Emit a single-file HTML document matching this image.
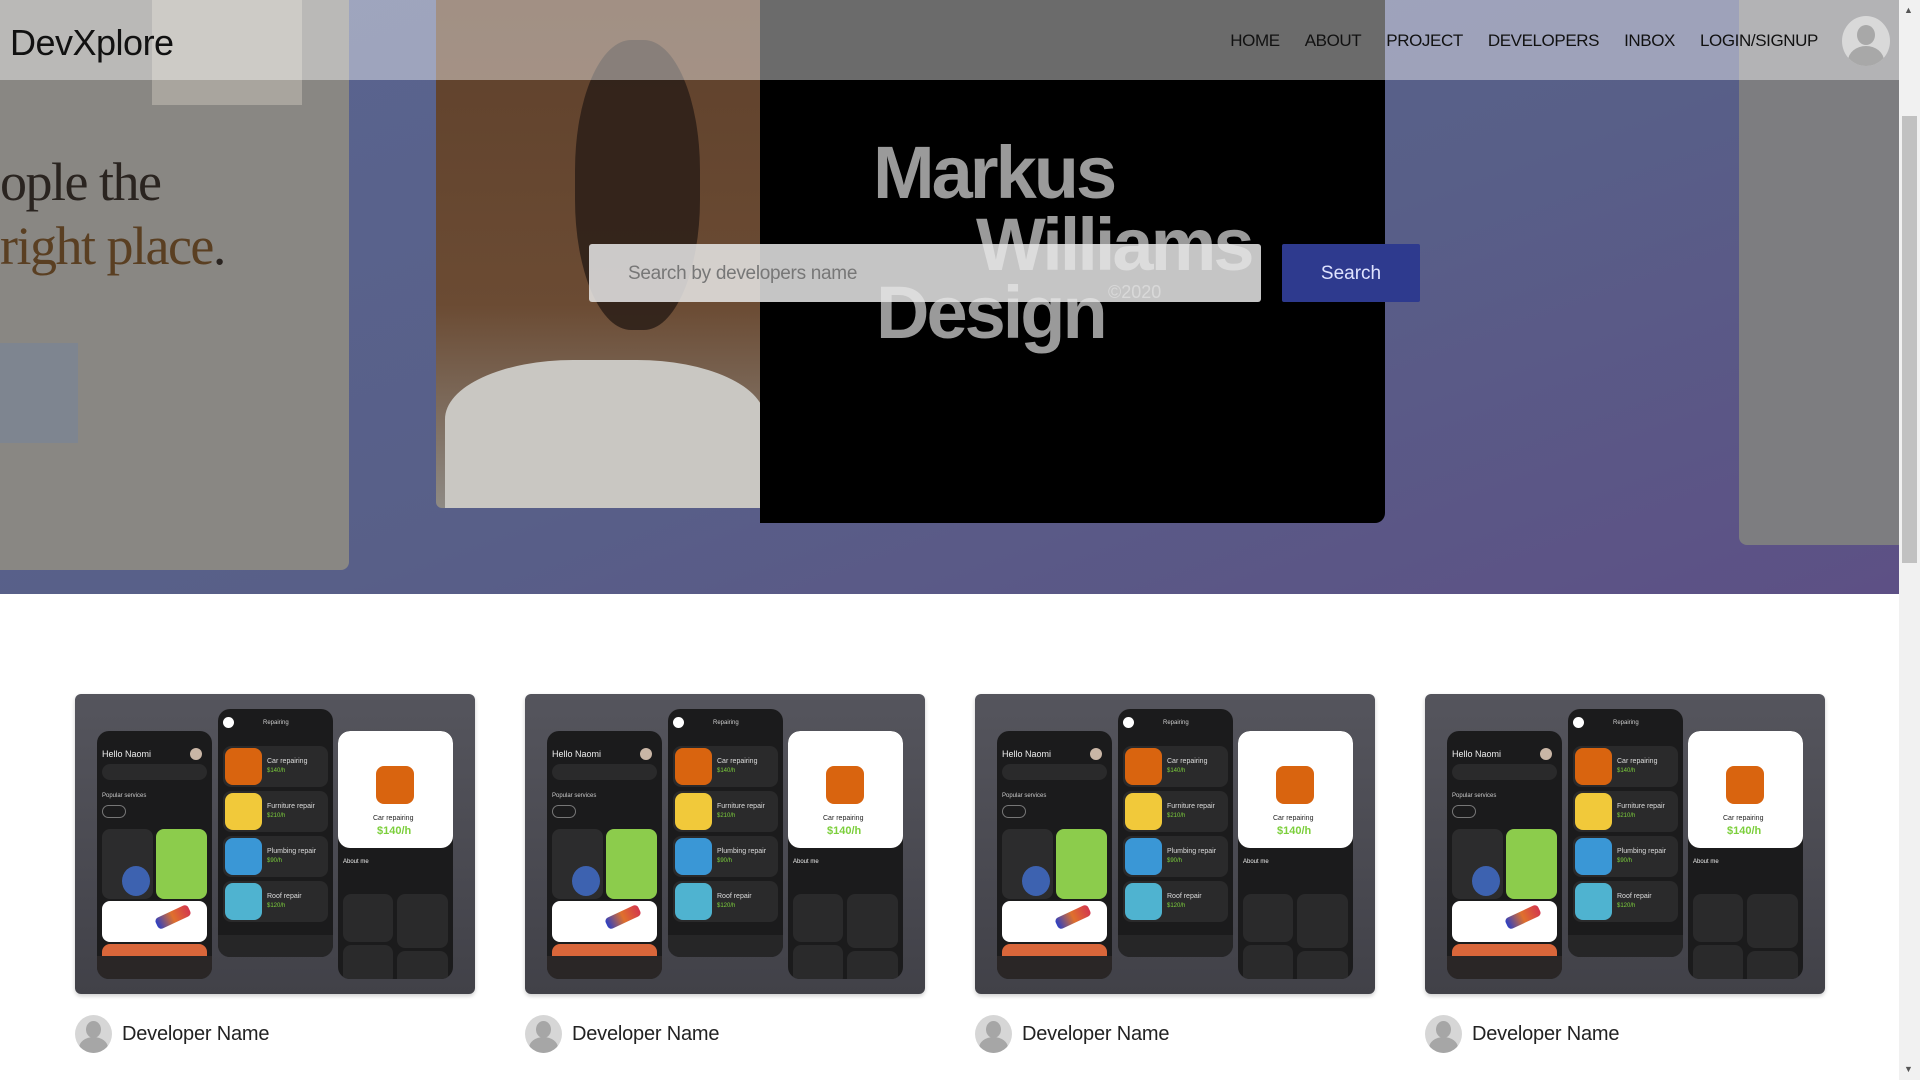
<!DOCTYPE html>
<html><head><meta charset="utf-8"><style>
*{margin:0;padding:0;box-sizing:border-box}
body{width:1920px;height:1080px;overflow:hidden;background:#fff;font-family:"Liberation Sans",sans-serif;position:relative}
.hero{position:absolute;left:0;top:0;width:1899px;height:594px;background:linear-gradient(160deg,#5a6590 0%,#585f88 55%,#5d5085 100%);overflow:hidden}
.abs{position:absolute}
.nav{position:absolute;left:0;top:0;width:1899px;height:80px;background:rgba(255,255,255,0.42)}
.logo{position:absolute;left:10px;top:22px;font-size:36px;color:#111;letter-spacing:-0.5px}
.links{position:absolute;top:31px;right:102px;display:flex;gap:25px;font-size:17px;color:#111;letter-spacing:-0.4px}
.avatar{position:absolute;left:1842px;top:16px;width:48px;height:50px;border-radius:50%;background:#d9d9d9;overflow:hidden}
.sb{position:absolute;left:1899px;top:0;width:21px;height:1080px;background:#f1f1f1}
.search{position:absolute;left:589px;top:244px;width:672px;height:58px;background:rgba(232,232,232,0.85);border-radius:3px;font-size:19px;color:#777;padding:19px 0 0 39px;letter-spacing:-0.3px}
.btn{position:absolute;left:1282px;top:244px;width:138px;height:58px;background:#2e3a8e;color:#dfe3ff;font-size:19px;text-align:center;line-height:60px;border-radius:2px}
.card{position:absolute;top:694px;width:400px;height:300px;border-radius:6px;background:linear-gradient(180deg,#55555d,#414148);overflow:hidden;box-shadow:0 2px 4px rgba(0,0,0,.2)}
.ph{position:absolute;width:115px;height:248px;background:#1b1b1c;border-radius:12px;overflow:hidden;font-size:6px;color:#ccc}
.it{position:absolute;left:5px;width:105px;height:41px;background:#2a2a2b;border-radius:8px}
.pic{position:absolute;left:2px;top:2px;width:37px;height:37px;border-radius:8px}
.g{color:#7ccf3c}
.dev{position:absolute;top:1015px;font-size:20px;color:#222;display:flex;align-items:center;letter-spacing:-0.2px}
.dav{width:37px;height:38px;border-radius:50%;background:#d6d6d6;margin-right:10px;overflow:hidden;position:relative}
</style></head><body>
<div class="hero">
  <div class="abs" style="left:0;top:0;width:349px;height:570px;background:#898783;border-radius:0 0 8px 0"></div>
  <div class="abs" style="left:152px;top:0;width:150px;height:105px;background:#a9a59e"></div>
  <div class="abs" style="left:0;top:343px;width:78px;height:100px;background:#7e8590"></div>
  <div class="abs" style="left:0;top:150px;font-family:'Liberation Serif',serif;font-size:54px;color:#2a2420;line-height:64px;letter-spacing:-1.5px">ople the<br><span style="color:#5a3f22">right place</span>.</div>
  <div class="abs" style="left:436px;top:0;width:330px;height:508px;background:linear-gradient(180deg,#5f412c,#6b4b33 60%,#8e8a84);border-radius:0 0 0 6px"></div>
  <div class="abs" style="left:575px;top:40px;width:125px;height:290px;background:#2c1e17;border-radius:45%;opacity:.85"></div>
  <div class="abs" style="left:445px;top:360px;width:320px;height:148px;background:#c9c7c2;border-radius:40% 40% 0 0"></div>
  <div class="abs" style="left:760px;top:0;width:625px;height:523px;background:#000;border-radius:0 0 10px 0"></div>
  <div class="abs" style="left:1739px;top:0;width:160px;height:545px;background:#7d7d80;border-radius:0 0 0 8px"></div>
  <div class="abs" style="left:873px;top:136px;font-size:74px;font-weight:bold;color:#9a9a9a;letter-spacing:-3px;line-height:74px">Markus</div>
  <div class="abs" style="left:976px;top:208px;font-size:74px;font-weight:bold;color:#9a9a9a;letter-spacing:-3px;line-height:74px">Williams</div>
  <div class="abs" style="left:876px;top:276px;font-size:74px;font-weight:bold;color:#9a9a9a;letter-spacing:-3px;line-height:74px">Design</div>
  <div class="abs" style="left:1108px;top:282px;font-size:18px;color:#888">©2020</div>
  <div class="nav"></div>
</div>
<div class="logo">DevXplore</div>
<div class="links"><span>HOME</span><span>ABOUT</span><span>PROJECT</span><span>DEVELOPERS</span><span>INBOX</span><span>LOGIN/SIGNUP</span></div>
<div class="avatar"><div class="abs" style="left:15px;top:9px;width:18px;height:20px;border-radius:50%;background:#a8a8a8"></div><div class="abs" style="left:6px;top:30px;width:36px;height:30px;border-radius:50% 50% 0 0;background:#a8a8a8"></div></div>
<div class="search">Search by developers name</div>
<div class="btn">Search</div>
<div class="sb"><div class="abs" style="left:5px;top:5px;font-size:9px;color:#555">▲</div><div class="abs" style="left:3px;top:116px;width:15px;height:447px;background:#c1c1c1"></div><div class="abs" style="left:5px;top:1064px;font-size:9px;color:#555">▼</div></div>

<div id="cards"></div>
<script>
var card='<div class="ph" style="left:22px;top:37px"><div class="abs" style="left:5px;top:18px;font-size:9px;color:#eee">Hello Naomi</div><div class="abs" style="left:93px;top:17px;width:12px;height:12px;border-radius:50%;background:#c9b6a6"></div><div class="abs" style="left:5px;top:33px;width:105px;height:16px;border-radius:8px;background:#2a2a2b"></div><div class="abs" style="left:5px;top:62px">Popular services</div><div class="abs" style="left:5px;top:74px;width:24px;height:13px;border:1px solid #777;border-radius:7px"></div><div class="abs" style="left:5px;top:98px;width:51px;height:70px;background:#2c2c2d;border-radius:8px"></div><div class="abs" style="left:59px;top:98px;width:51px;height:70px;background:#8ccc4c;border-radius:8px"></div><div class="abs" style="left:25px;top:135px;width:28px;height:30px;border-radius:50%;background:#3d62b0"></div><div class="abs" style="left:5px;top:170px;width:105px;height:41px;background:#fff;border-radius:8px"></div><div class="abs" style="left:58px;top:180px;width:36px;height:12px;background:linear-gradient(90deg,#2b3fc4,#e0702c,#d3374e);transform:rotate(-25deg);border-radius:4px"></div><div class="abs" style="left:5px;top:213px;width:105px;height:20px;background:#d9663a;border-radius:8px 8px 0 0"></div><div class="abs" style="left:0;top:225px;width:115px;height:23px;background:#2a2626"></div></div>'
+'<div class="ph" style="left:143px;top:15px"><div class="abs" style="left:5px;top:8px;width:11px;height:11px;border-radius:50%;background:#fff"></div><div class="abs" style="left:45px;top:11px">Repairing</div>'
+'<div class="it" style="top:37px"><div class="pic" style="background:#d9640f"></div><div class="abs g" style="left:44px;top:12px;color:#ddd;font-size:7px">Car repairing</div><div class="abs g" style="left:44px;top:22px">$140/h</div></div>'
+'<div class="it" style="top:82px"><div class="pic" style="background:#f1c93a"></div><div class="abs" style="left:44px;top:12px;color:#ddd;font-size:7px">Furniture repair</div><div class="abs g" style="left:44px;top:22px">$210/h</div></div>'
+'<div class="it" style="top:127px"><div class="pic" style="background:#3a97d6"></div><div class="abs" style="left:44px;top:12px;color:#ddd;font-size:7px">Plumbing repair</div><div class="abs g" style="left:44px;top:22px">$90/h</div></div>'
+'<div class="it" style="top:172px"><div class="pic" style="background:#4fb3d0"></div><div class="abs" style="left:44px;top:12px;color:#ddd;font-size:7px">Roof repair</div><div class="abs g" style="left:44px;top:22px">$120/h</div></div>'
+'<div class="abs" style="left:0;top:226px;width:115px;height:22px;background:#262627"></div></div>'
+'<div class="ph" style="left:263px;top:37px"><div class="abs" style="left:0;top:0;width:115px;height:117px;background:#fff;border-radius:12px"></div><div class="abs" style="left:38px;top:35px;width:38px;height:38px;border-radius:8px;background:#d9640f"></div><div class="abs" style="left:35px;top:84px;color:#222;font-size:7px">Car repairing</div><div class="abs g" style="left:39px;top:94px;font-size:11px;font-weight:bold">$140/h</div><div class="abs" style="left:5px;top:128px;color:#eee">About me</div><div class="abs" style="left:5px;top:163px;width:50px;height:48px;background:#2a2a2b;border-radius:8px"></div><div class="abs" style="left:59px;top:163px;width:51px;height:54px;background:#2a2a2b;border-radius:8px"></div><div class="abs" style="left:5px;top:214px;width:50px;height:40px;background:#2a2a2b;border-radius:8px"></div><div class="abs" style="left:59px;top:220px;width:51px;height:40px;background:#2a2a2b;border-radius:8px"></div></div>';
var dav='<div class="dav"><div class="abs" style="left:11px;top:6px;width:15px;height:17px;border-radius:50%;background:#a6a6a6"></div><div class="abs" style="left:4px;top:22px;width:29px;height:22px;border-radius:50% 50% 0 0;background:#a6a6a6"></div></div>';
var h='';[75,525,975,1425].forEach(function(x){h+='<div class="card" style="left:'+x+'px">'+card+'</div><div class="dev" style="left:'+x+'px">'+dav+'Developer Name</div>';});
document.getElementById('cards').innerHTML=h;
</script>
</body></html>
